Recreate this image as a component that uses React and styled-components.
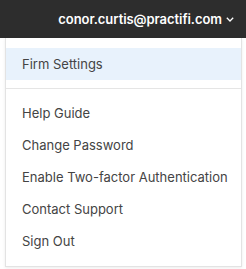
import styled, { createGlobalStyle } from "styled-components";

const GlobalStyle = createGlobalStyle`
  html, body {
    margin: 0;
    padding: 0;
    background: #ffffff;
  }
  body {
    font-family: Inter, "Noto Sans", sans-serif;
  }
`;

const Page = styled.div`
  width: 246px;
  height: 269px;
  background: #fff;
`;

const TopBar = styled.div`
  height: 38px;
  background: #2d2d2d;
  display: flex;
  align-items: center;
  justify-content: flex-end;
  padding-right: 12px;
  box-sizing: border-box;
`;

const UserButton = styled.div`
  display: flex;
  align-items: center;
  gap: 4px;
  color: #fff;
  font-size: 13px;
  font-weight: 600;
  letter-spacing: -0.05px;
`;

const Menu = styled.div`
  margin: 0 4px 0 5px;
  border: 1px solid #e3e3e3;
  border-top: none;
  box-shadow: 0 1px 3px rgba(0, 0, 0, 0.08);
  padding: 10px 0 9px;
  background: #fff;
`;

const Item = styled.div`
  height: 32px;
  display: flex;
  align-items: center;
  padding-left: 16px;
  font-size: 13px;
  color: #444;
  background: ${(p) => (p.active ? "#e8f2fc" : "transparent")};
`;

const Divider = styled.div`
  height: 1px;
  background: #e5e5e5;
  margin: 8px 0;
`;

const Chevron = () => (
  <svg width="8" height="5" viewBox="0 0 8 5" fill="none">
    <path d="M0.8 0.8l3.2 3.2l3.2-3.2" stroke="#fff" strokeWidth="1.3" />
  </svg>
);

const items = [
  "Help Guide",
  "Change Password",
  "Enable Two-factor Authentication",
  "Contact Support",
  "Sign Out",
];

const App = () => {
  return (
    <Page>
      <GlobalStyle />
      <TopBar>
        <UserButton>
          conor.curtis@practifi.com
          <Chevron />
        </UserButton>
      </TopBar>
      <Menu>
        <Item active>Firm Settings</Item>
        <Divider />
        {items.map((label) => (
          <Item key={label}>{label}</Item>
        ))}
      </Menu>
    </Page>
  );
};

export default App;
